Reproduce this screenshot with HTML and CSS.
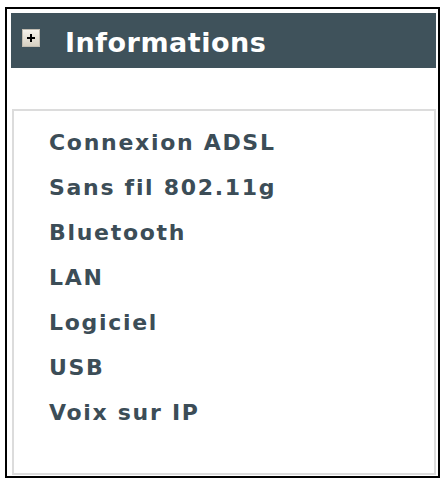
FILE: index.html
```html
<!DOCTYPE html>
<html>
<head>
<meta charset="utf-8">
<link rel="stylesheet" href="styles.css">
</head>
<body>
<div class="frame">
  <div class="header">
    <span class="toggle"><svg width="12" height="12" viewBox="0 0 12 12"><path d="M6 2v8M2 6h8" stroke="#000" stroke-width="2"/></svg></span>
    <span class="title">Informations</span>
  </div>
  <div class="spacer"></div>
  <ul class="menu">
    <li>Connexion ADSL</li>
    <li>Sans fil 802.11g</li>
    <li>Bluetooth</li>
    <li>LAN</li>
    <li>Logiciel</li>
    <li>USB</li>
    <li>Voix sur IP</li>
  </ul>
</div>
</body>
</html>
```
FILE: styles.css
```css
html, body {
  margin: 0;
  padding: 0;
  background: #fff;
}
.frame {
  box-sizing: border-box;
  margin: 7px 0 0 5px;
  width: 435px;
  height: 471px;
  border: 2px solid #000;
  padding: 4px 2px 0 4px;
  display: flex;
  flex-direction: column;
}
.header {
  height: 55px;
  background: #3f525b;
  display: flex;
  align-items: center;
  padding-left: 11px;
  flex-shrink: 0;
}
.toggle {
  width: 18px;
  height: 18px;
  box-sizing: border-box;
  background: linear-gradient(#f6f3ec, #d6d0c2);
  border: 1px solid #c2bdb2;
  display: flex;
  align-items: center;
  justify-content: center;
  margin-top: -5px;
}
.toggle svg { display: block; }
.title {
  margin-left: 25px;
  margin-top: 4px;
  color: #fff;
  font-family: "DejaVu Sans", sans-serif;
  font-weight: bold;
  font-size: 27px;
  letter-spacing: 0.5px;
  line-height: 1;
}
.spacer {
  height: 41px;
  flex-shrink: 0;
}
.menu {
  list-style: none;
  margin: 0 0 1px 1px;
  padding: 9px 0 0 35px;
  flex: 1;
  border: 2px solid #dcdcdc;
}
.menu li {
  font-family: "DejaVu Sans", sans-serif;
  font-weight: bold;
  font-size: 22px;
  letter-spacing: 1.7px;
  color: #3c4d57;
  height: 45px;
  line-height: 45px;
}
```
